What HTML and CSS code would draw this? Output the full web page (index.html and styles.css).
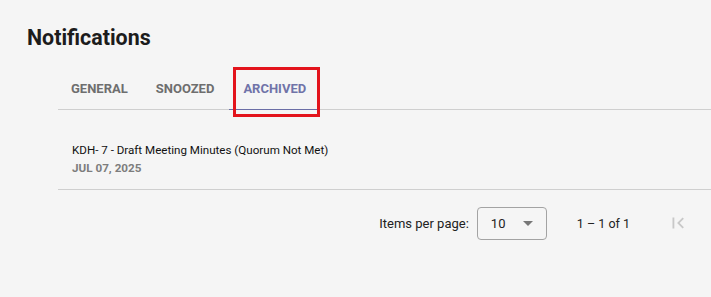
FILE: index.html
```html
<!DOCTYPE html>
<html>
<head>
<meta charset="utf-8">
<link rel="stylesheet" href="styles.css">
</head>
<body>
<div class="page">
  <h1 class="title">Notifications</h1>
  <div class="content">
    <div class="tabs">
      <div class="tab">GENERAL</div>
      <div class="tab">SNOOZED</div>
      <div class="tab active">ARCHIVED<span class="highlight"></span></div>
    </div>
    <div class="list">
      <div class="item">
        <div class="item-title">KDH- 7 - Draft Meeting Minutes (Quorum Not Met)</div>
        <div class="item-date">JUL 07, 2025</div>
      </div>
    </div>
    <div class="paginator">
      <span class="label">Items per page:</span>
      <div class="select">
        <span>10</span>
        <span class="arrow"></span>
      </div>
      <span class="range">1 – 1 of 1</span>
      <button class="icon-btn" aria-label="First page">
        <svg width="22" height="22" viewBox="0 0 24 24"><path d="M18.41 16.59L13.82 12l4.59-4.59L17 6l-6 6 6 6zM6 6h2v12H6z" fill="currentColor"/></svg>
      </button>
    </div>
  </div>
</div>
</body>
</html>
```
FILE: styles.css
```css
html, body {
  margin: 0;
  padding: 0;
  background: #f5f5f5;
  font-family: Roboto, "Liberation Sans", Arial, sans-serif;
  color: #1f1f1f;
}
.page {
  width: 711px;
  height: 297px;
  overflow: hidden;
}
.title {
  margin: 0;
  padding: 25px 0 0 27px;
  font-size: 21.4px;
  line-height: 25px;
  font-weight: 700;
  color: #1c1c1c;
}
.content {
  margin-left: 58px;
}
.tabs {
  display: flex;
  margin-top: 21px;
  border-bottom: 1px solid #cfcfcf;
}
.tab {
  position: relative;
  height: 38px;
  line-height: 36px;
  padding: 0 15px 0 13px;
  font-size: 13px;
  font-weight: 700;
  color: #6e6e6e;
}
.tab.active {
  padding: 0 14px 0 14px;
  color: #7073a8;
  border-bottom: 1px solid #6b6ea6;
  height: 38px;
  margin-bottom: -1px;
}
.highlight {
  position: absolute;
  left: 4px;
  right: 0;
  top: -4px;
  bottom: -8px;
  border: 3px solid #e3141c;
}
.list {
  padding-top: 31px;
}
.item {
  padding: 0 0 12px 14px;
  border-bottom: 1px solid #cfcfcf;
}
.item-title {
  font-size: 11.6px;
  line-height: 18px;
  color: #111;
}
.item-date {
  font-size: 11.7px;
  line-height: 18px;
  font-weight: 700;
  color: #7d7d7d;
}
.paginator {
  display: flex;
  align-items: center;
  justify-content: flex-end;
  margin-top: 13px;
  padding-right: 13px;
  font-size: 13px;
  color: #222;
}
.label {
  margin-right: 8px;
}
.select {
  box-sizing: border-box;
  width: 70px;
  height: 33px;
  border: 1px solid #a3a3a3;
  border-radius: 4px;
  display: flex;
  align-items: center;
  justify-content: space-between;
  padding: 0 13px 0 13px;
  font-size: 13px;
  color: #222;
}
.arrow {
  width: 0;
  height: 0;
  border-left: 5px solid transparent;
  border-right: 5px solid transparent;
  border-top: 5px solid #777;
}
.range {
  margin-left: 30px;
  margin-right: 28px;
  font-size: 12.5px;
}
.icon-btn {
  width: 40px;
  height: 40px;
  border: none;
  background: none;
  padding: 0;
  display: flex;
  align-items: center;
  justify-content: center;
  color: #c8c8c8;
}
```
